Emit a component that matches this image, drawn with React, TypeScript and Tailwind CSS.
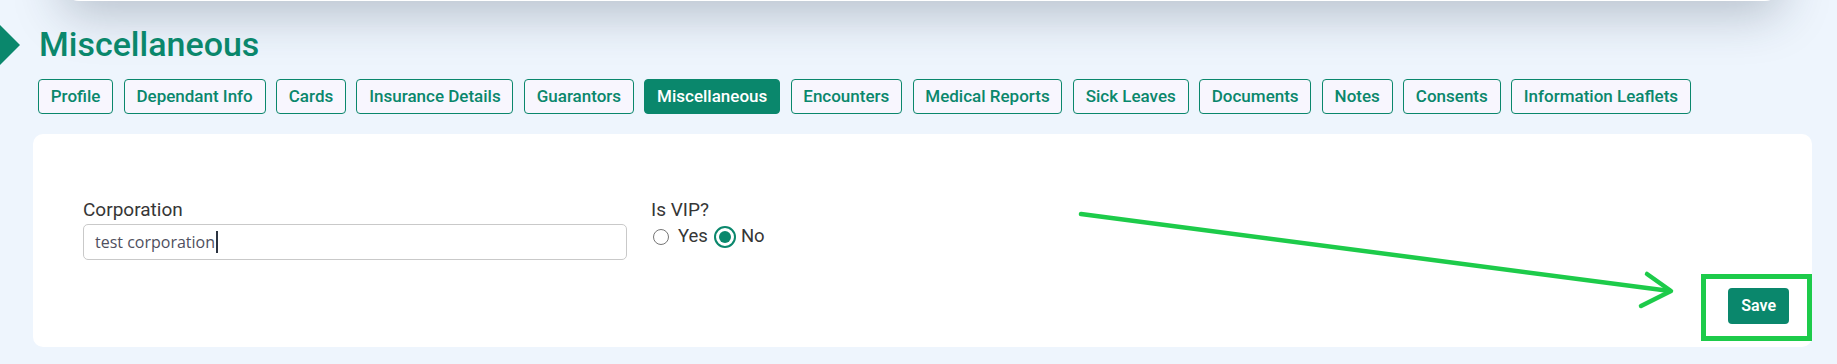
import { useState } from 'react';

const tabs = [
  'Profile',
  'Dependant Info',
  'Cards',
  'Insurance Details',
  'Guarantors',
  'Miscellaneous',
  'Encounters',
  'Medical Reports',
  'Sick Leaves',
  'Documents',
  'Notes',
  'Consents',
  'Information Leaflets',
];

export default function App() {
  const [active, setActive] = useState('Miscellaneous');
  const [vip, setVip] = useState<'yes' | 'no'>('no');

  return (
    <div className="relative min-h-[364px] overflow-hidden bg-[#eef5fd] font-['Roboto',sans-serif]">
      {/* header card scrolled out of view, only its shadow is left */}
      <div className="ml-[63px] mr-[56px] -mt-[61px] h-[62px] rounded-b-[16px] bg-white shadow-[0_12px_50px_rgba(30,45,70,0.28)]" />

      {/* page title */}
      <div className="mt-[23px] flex items-center">
        <svg width="20" height="40" viewBox="0 0 20 40" className="shrink-0">
          <polygon points="0,0 20,20 0,40" fill="#0a876c" />
        </svg>
        <h1 className="ml-[19px] text-[34px] leading-[41px] font-medium text-[#0a876c]">Miscellaneous</h1>
      </div>

      {/* tabs */}
      <div className="mt-[14px] ml-[38px] flex gap-[10.5px]">
        {tabs.map((t) => (
          <button
            key={t}
            onClick={() => setActive(t)}
            className={
              t === active
                ? 'rounded-[4px] border border-[#0a876c] bg-[#0a876c] px-[11.75px] py-[4px] text-[17px] leading-[25px] font-medium whitespace-nowrap text-white'
                : 'rounded-[4px] border border-[#0a876c] bg-[#f8f6fe] px-[11.75px] py-[4px] text-[17px] leading-[25px] font-medium whitespace-nowrap text-[#0a876c]'
            }
          >
            {t}
          </button>
        ))}
      </div>

      {/* form card */}
      <div className="mt-[20px] ml-[33px] mr-[25px] rounded-[10px] bg-white pl-[50px] pr-[23px] pt-[62px] pb-[23px]">
        <div className="flex">
          <div className="w-[544px]">
            <label className="block text-[19px] leading-[28px] text-[#363636]">Corporation</label>
            <div className="flex h-[36px] items-center rounded-[5px] border border-[#c9c9c9] pl-[11px] font-['Open_Sans',sans-serif] text-[16px] text-[#4f5060]">
              test corporation
              <span className="ml-[1px] inline-block h-[22px] w-[2px] bg-[#2b3340]" />
            </div>
          </div>
          <div className="ml-[24px]">
            <div className="text-[19px] leading-[28px] text-[#363636]">Is VIP?</div>
            <div className="flex h-[26px] items-center text-[18.5px] text-[#363636]">
              <button onClick={() => setVip('yes')} className="ml-[2px] flex items-center">
                {vip === 'yes' ? (
                  <span className="flex h-[22px] w-[22px] items-center justify-center rounded-full border-[2.5px] border-[#0a876c] bg-white">
                    <span className="h-[12px] w-[12px] rounded-full bg-[#0a876c]" />
                  </span>
                ) : (
                  <span className="h-[16px] w-[16px] rounded-full border border-[#767676] bg-white" />
                )}
                <span className="ml-[9px]">Yes</span>
              </button>
              <button onClick={() => setVip('no')} className="ml-[6px] flex items-center">
                {vip === 'no' ? (
                  <span className="flex h-[22px] w-[22px] items-center justify-center rounded-full border-[2.5px] border-[#0a876c] bg-white">
                    <span className="h-[12px] w-[12px] rounded-full bg-[#0a876c]" />
                  </span>
                ) : (
                  <span className="h-[16px] w-[16px] rounded-full border border-[#767676] bg-white" />
                )}
                <span className="ml-[5px]">No</span>
              </button>
            </div>
          </div>
        </div>

        <div className="mt-[28px] flex justify-end">
          <button className="h-[36px] rounded-[4px] bg-[#0a876c] px-[13px] text-[16px] font-semibold text-white">Save</button>
        </div>
      </div>

      {/* annotation: arrow + highlight box */}
      <svg
        className="pointer-events-none absolute top-0 left-0"
        width="1837"
        height="364"
        viewBox="0 0 1837 364"
      >
        <g stroke="#1dcb4a" strokeWidth="4.5" strokeLinecap="round" strokeLinejoin="round" fill="none">
          <line x1="1081" y1="214" x2="1670" y2="291" />
          <polyline points="1647,274 1671,291 1641,306" />
        </g>
      </svg>
      <div className="pointer-events-none absolute top-[274px] left-[1701px] h-[67px] w-[111px] border-[5px] border-[#1dcb4a]" />
    </div>
  );
}
